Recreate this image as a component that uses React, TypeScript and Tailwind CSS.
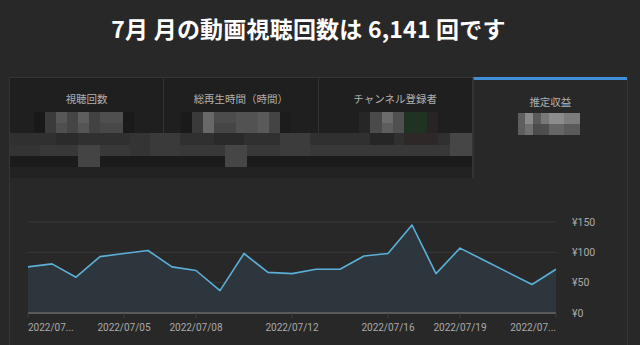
import React from "react";

const tabs = ["視聴回数", "総再生時間（時間）", "チャンネル登録者", "推定収益"];

// values in yen, one per day 7/01 .. 7/23
const revenue = [
  76, 81, 59, 93, 98, 103, 76, 70, 37, 98, 67, 65, 72, 72, 94, 98, 145, 65,
  107, 87, 67, 47, 72,
];

const X0 = 28;
const STEP = 24;
const Y0 = 313;
const PX_PER_YEN = 91 / 150;

const xAt = (i: number) => X0 + i * STEP;
const yAt = (v: number) => Y0 - v * PX_PER_YEN;

const xLabels: { i: number; text: string; anchor: "start" | "middle" | "end" }[] = [
  { i: 0, text: "2022/07...", anchor: "start" },
  { i: 4, text: "2022/07/05", anchor: "middle" },
  { i: 7, text: "2022/07/08", anchor: "middle" },
  { i: 11, text: "2022/07/12", anchor: "middle" },
  { i: 15, text: "2022/07/16", anchor: "middle" },
  { i: 18, text: "2022/07/19", anchor: "middle" },
  { i: 22, text: "2022/07...", anchor: "end" },
];

// blurred-out numbers, drawn as a mosaic: [x, y, w, h, fill]
type Cell = [number, number, number, number, string];
const mosaic: Cell[] = [
  // band across the first three tabs
  [10, 133, 462, 12, "#303030"],
  [10, 145, 462, 11, "#383838"],
  [10, 156, 462, 11, "#1b1b1b"],
  [10, 167, 462, 11, "#222222"],
  [56, 133, 22, 12, "#2b2b2b"],
  [130, 133, 20, 23, "#343434"],
  [150, 133, 30, 23, "#3a3a3a"],
  [214, 133, 30, 12, "#2a2a2a"],
  [280, 133, 30, 23, "#3c3c3c"],
  [370, 133, 24, 12, "#262626"],
  [404, 133, 34, 12, "#2e2828"],
  [450, 133, 22, 23, "#464646"],
  [78, 145, 22, 22, "#444444"],
  [225, 145, 22, 22, "#464646"],
  [10, 145, 30, 11, "#333333"],
  // tab 1 number
  [34, 112, 11, 21, "#191919"],
  [45, 112, 11, 21, "#3b3b3b"],
  [56, 112, 11, 11, "#575757"],
  [56, 123, 11, 10, "#4f4f4f"],
  [67, 112, 11, 21, "#454545"],
  [78, 112, 11, 11, "#5e5e5e"],
  [78, 123, 11, 10, "#555555"],
  [89, 112, 11, 21, "#424242"],
  [100, 112, 23, 11, "#4f4f4f"],
  [100, 123, 23, 10, "#484848"],
  [123, 112, 11, 21, "#1a1a1a"],
  // tab 2 number
  [181, 112, 11, 21, "#1a1a1a"],
  [192, 112, 11, 21, "#3a3a3a"],
  [203, 112, 11, 21, "#686868"],
  [214, 112, 22, 11, "#4c4c4c"],
  [214, 123, 22, 10, "#454545"],
  [236, 112, 22, 21, "#525252"],
  [258, 112, 11, 21, "#5a5a5a"],
  [269, 112, 11, 21, "#444444"],
  [280, 112, 11, 21, "#1c1c1c"],
  // tab 3 number
  [359, 112, 11, 21, "#262626"],
  [370, 112, 12, 21, "#4a4a4a"],
  [382, 112, 11, 11, "#6c6c6c"],
  [382, 123, 11, 10, "#5e5e5e"],
  [393, 112, 11, 21, "#505050"],
  [404, 112, 23, 21, "#1e3322"],
  [427, 112, 11, 21, "#2a2323"],
  // tab 4 number
  [518, 113, 7, 22, "#5e5e5e"],
  [525, 113, 8, 11, "#8a8a8a"],
  [525, 124, 8, 11, "#707070"],
  [533, 113, 8, 11, "#5a5a5a"],
  [533, 124, 8, 11, "#4c4c4c"],
  [541, 113, 8, 11, "#787878"],
  [541, 124, 8, 11, "#4e4e4e"],
  [549, 113, 15, 11, "#8c8c8c"],
  [549, 124, 15, 11, "#666666"],
  [564, 113, 16, 11, "#7c7c7c"],
  [564, 124, 16, 11, "#5a5a5a"],
];

function Chart() {
  const pts = revenue.map((v, i) => `${xAt(i)},${yAt(v).toFixed(1)}`);
  const line = `M${pts.join(" L")}`;
  const area = `${line} L${xAt(22)},${Y0} L${X0},${Y0} Z`;

  return (
    <svg viewBox="10 178 617 167" className="block w-[617px] h-[167px]">
      {[150, 100, 50].map((v) => (
        <line
          key={v}
          x1={X0}
          x2={xAt(22)}
          y1={yAt(v)}
          y2={yAt(v)}
          stroke="#3a3a3a"
          strokeWidth={1}
        />
      ))}
      <path d={area} fill="#2d363c" />
      <path
        d={line}
        fill="none"
        stroke="#5cb0d8"
        strokeWidth={1.6}
        strokeLinejoin="round"
      />
      <line x1={X0} x2={xAt(22)} y1={Y0} y2={Y0} stroke="#5a5a5a" strokeWidth={2} />
      {xLabels.map((l) => (
        <line
          key={l.i}
          x1={xAt(l.i)}
          x2={xAt(l.i)}
          y1={Y0}
          y2={318}
          stroke="#3c3c3c"
          strokeWidth={1}
        />
      ))}
      {[150, 100, 50, 0].map((v) => (
        <text
          key={v}
          x={572}
          y={yAt(v) + 3.5}
          fill="#aaaaaa"
          fontSize={10.5}
          fontFamily="Roboto, 'Liberation Sans', sans-serif"
        >
          ¥{v}
        </text>
      ))}
      {xLabels.map((l) => (
        <text
          key={l.text + l.i}
          x={xAt(l.i)}
          y={331}
          textAnchor={l.anchor}
          fill="#aaaaaa"
          fontSize={10}
          fontFamily="Roboto, 'Liberation Sans', sans-serif"
        >
          {l.text}
        </text>
      ))}
    </svg>
  );
}

export default function App() {
  return (
    <div className="w-[640px] h-[345px] overflow-hidden bg-[#282828] font-['Noto_Sans_CJK_JP','Noto_Sans',sans-serif]">
      <div className="h-[56px] flex items-center justify-center pr-[23px]">
        <h1 className="text-[23px] font-bold text-white leading-none tracking-[0.2px]">
          7月 月の動画視聴回数は 6,141 回です
        </h1>
      </div>

      <div className="ml-[9px] w-[619px] h-[289px] mt-[21px] border-t border-x border-[#353535] relative">
        <div className="grid grid-cols-4 h-[100px]">
          {tabs.map((t, i) => (
            <div
              key={t}
              className={
                i === 3
                  ? "bg-[#282828] border-t-[3px] border-[#3f8fd8] border-l border-l-[#333333] -mt-px flex justify-center pt-[17px]"
                  : "bg-[#1f1f1f] border-r border-[#333333] last:border-r-0 flex justify-center pt-[16px]"
              }
            >
              <span className="text-[10.5px] text-[#b0b0b0] leading-none">{t}</span>
            </div>
          ))}
        </div>

        {/* blurred figures over the tabs */}
        <svg
          viewBox="10 78 617 100"
          className="absolute left-0 top-0 w-[617px] h-[100px] pointer-events-none"
        >
          {mosaic.map(([x, y, w, h, c], i) => (
            <rect key={i} x={x} y={y} width={w} height={h} fill={c} />
          ))}
        </svg>

        <Chart />
      </div>
    </div>
  );
}
